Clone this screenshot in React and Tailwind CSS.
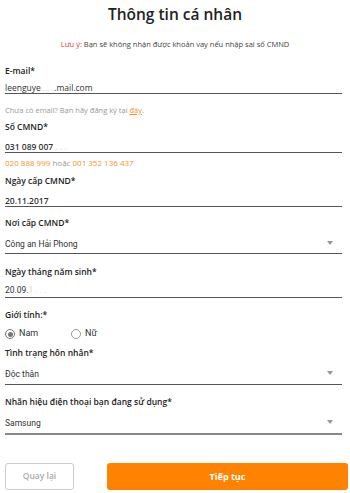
import React from "react";

const label = "text-[8.5px] font-semibold text-[#222] leading-[12px] h-[12px]";
const Input = ({ children, h = "h-[12px]", extra = "" }) => (
  <div className={`${h} border-b border-[#555] flex items-end justify-between text-[8.5px] leading-none text-[#333] ${extra}`}>
    {children}
  </div>
);
const Caret = () => (
  <svg width="6" height="4" viewBox="0 0 6 4" className="mr-[9px] mb-[3px]">
    <path d="M0 0 L6 0 L3 4 Z" fill="#999" />
  </svg>
);

export default function App() {
  return (
    <div className="w-[350px] h-[493px] bg-white overflow-hidden" style={{ fontFamily: '"Open Sans", "Noto Sans", sans-serif' }}>
      <div className="h-[28px] leading-[28px] text-center text-[15.5px] font-semibold text-[#222]">Thông tin cá nhân</div>
      <div className="mt-[10px] h-[12px] leading-[12px] text-center text-[7.5px] text-[#444]">
        <span className="text-[#e53935]">Lưu ý:</span> Bạn sẽ không nhận được khoản vay nếu nhập sai số CMND
      </div>
      <div className="pl-[5px] pr-[8px]">
        <div className={`${label} mt-[15px]`}>E-mail*</div>
        <Input h="h-[17px]">
          <span className="pb-[1px]">leenguye<span className="text-[#ddd]">......</span>.mail.com</span>
        </Input>
        <div className="mt-[10px] h-[12px] leading-[12px] text-[7.5px] text-[#999]">
          Chưa có email? Bạn hãy đăng ký tại <span className="text-[#f7931e] underline">đây</span>.
        </div>
        <div className={`${label} mt-[5px]`}>Số CMND*</div>
        <Input h="h-[20px]">
          <span className="pb-[1px] font-semibold">031 089 007<span className="text-[#ddd]"> . . .</span></span>
        </Input>
        <div className="mt-[4px] h-[12px] leading-[12px] text-[8px] text-[#999]">
          <span className="text-[#f7931e]">020 888 999</span> hoặc <span className="text-[#f7931e]">001 352 136 437</span>
        </div>
        <div className={`${label} mt-[6px]`}>Ngày cấp CMND*</div>
        <Input h="h-[20px]">
          <span className="pb-[1px] font-semibold">20.11.2017</span>
        </Input>
        <div className={`${label} mt-[10px]`}>Nơi cấp CMND*</div>
        <Input h="h-[25px]" extra="pb-[5px]">
          <span style={{ fontFamily: "Roboto, sans-serif" }}>Công an Hải Phong</span>
          <Caret />
        </Input>
        <div className={`${label} mt-[12px]`}>Ngày tháng năm sinh*</div>
        <Input h="h-[20px]">
          <span className="pb-[3px]" style={{ fontFamily: "Roboto, sans-serif" }}>20.09.<span className="text-[#ddd]">1 . . .</span></span>
        </Input>
        <div className={`${label} mt-[11px]`}>Giới tính:*</div>
        <div className="mt-[7px] h-[12px] flex items-center text-[9px] text-[#333]" style={{ fontFamily: "Roboto, sans-serif" }}>
          <div className="flex items-center gap-[4px] w-[66px]">
            <span className="w-[10px] h-[10px] rounded-full border border-[#777] flex items-center justify-center">
              <span className="w-[5px] h-[5px] rounded-full bg-[#777]" />
            </span>
            Nam
          </div>
          <div className="flex items-center gap-[4px]">
            <span className="w-[10px] h-[10px] rounded-full border border-[#999]" />
            Nữ
          </div>
        </div>
        <div className={`${label} mt-[7px]`}>Tình trạng hôn nhân*</div>
        <Input h="h-[26px]" extra="pb-[6px]">
          <span style={{ fontFamily: "Roboto, sans-serif" }}>Độc thân</span>
          <Caret />
        </Input>
        <div className={`${label} mt-[11px]`}>Nhãn hiệu điện thoại bạn đang sử dụng*</div>
        <Input h="h-[27px]" extra="pb-[6px] border-b-2 border-[#888]">
          <span style={{ fontFamily: "Roboto, sans-serif" }}>Samsung</span>
          <Caret />
        </Input>
        <div className="mt-[28px] flex items-center justify-between">
          <button className="w-[69px] h-[27px] rounded-[3px] border border-[#ccc] text-[8.5px] font-semibold text-[#aaa]">Quay lại</button>
          <button className="w-[241px] h-[27px] rounded-[3px] bg-[#ff8200] text-[9px] font-bold text-white mr-[-6px]">Tiếp tục</button>
        </div>
      </div>
    </div>
  );
}
